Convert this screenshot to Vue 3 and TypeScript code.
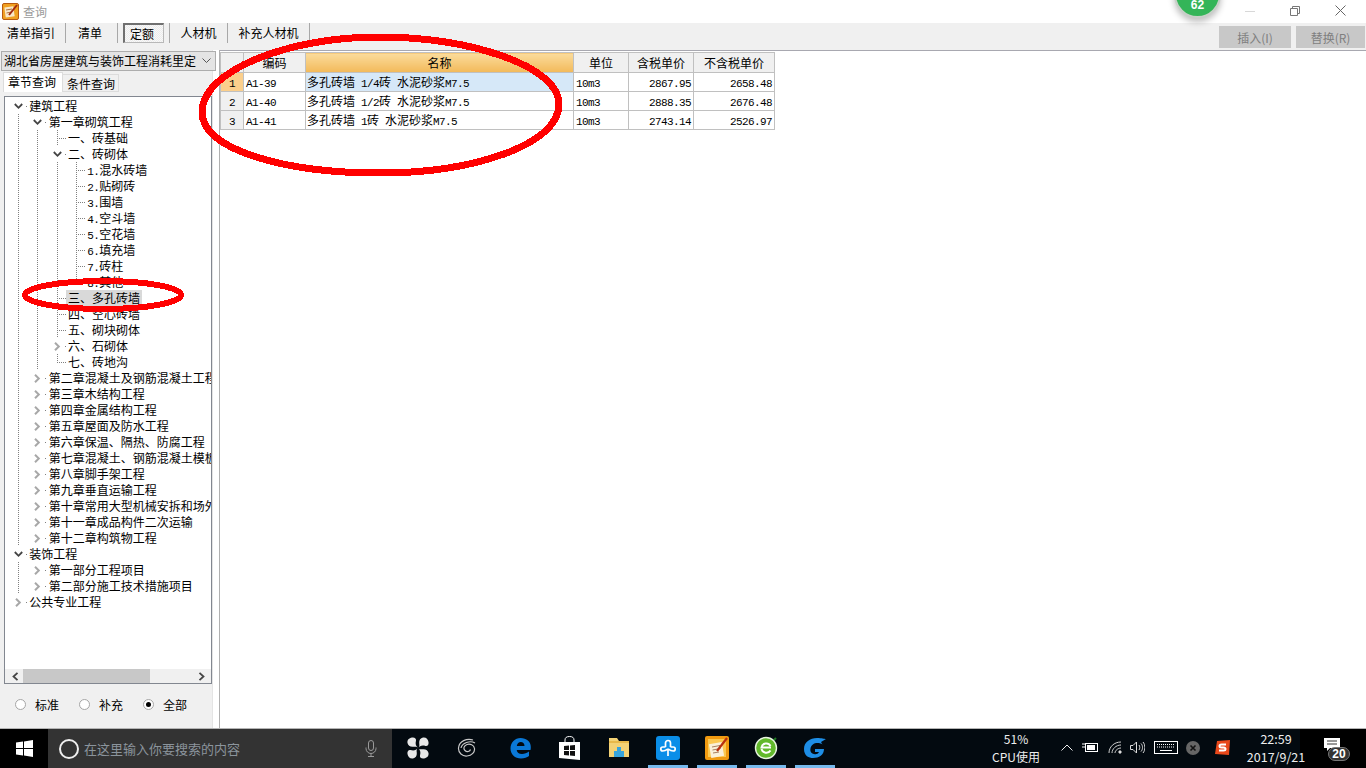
<script setup lang="ts">
interface TreeNode {
  label: string
  open?: boolean
  collapsed?: boolean
  selected?: boolean
  children?: TreeNode[]
}

interface FlatRow {
  label: string
  guides: boolean[]
  kind: 'open' | 'closed' | 'leaf' | 'last'
  selected: boolean
}

const tabs = [
  { label: '清单指引', width: 66 },
  { label: '清单', width: 52 },
  { label: '定额', width: 52, active: true },
  { label: '人材机', width: 58 },
  { label: '补充人材机', width: 82 },
]

const closed = (label: string): TreeNode => ({ label, collapsed: true })

const tree: TreeNode[] = [
  {
    label: '建筑工程',
    open: true,
    children: [
      {
        label: '第一章砌筑工程',
        open: true,
        children: [
          { label: '一、砖基础' },
          {
            label: '二、砖砌体',
            open: true,
            children: ['1.混水砖墙', '2.贴砌砖', '3.围墙', '4.空斗墙', '5.空花墙', '6.填充墙', '7.砖柱', '8.其他'].map((label) => ({ label })),
          },
          { label: '三、多孔砖墙', selected: true },
          { label: '四、空心砖墙' },
          { label: '五、砌块砌体' },
          closed('六、石砌体'),
          { label: '七、砖地沟' },
        ],
      },
      closed('第二章混凝土及钢筋混凝土工程'),
      closed('第三章木结构工程'),
      closed('第四章金属结构工程'),
      closed('第五章屋面及防水工程'),
      closed('第六章保温、隔热、防腐工程'),
      closed('第七章混凝土、钢筋混凝土模板及支架工程'),
      closed('第八章脚手架工程'),
      closed('第九章垂直运输工程'),
      closed('第十章常用大型机械安拆和场外运输费用'),
      closed('第十一章成品构件二次运输'),
      closed('第十二章构筑物工程'),
    ],
  },
  {
    label: '装饰工程',
    open: true,
    children: [closed('第一部分工程项目'), closed('第二部分施工技术措施项目')],
  },
  closed('公共专业工程'),
]

function flatten (nodes: TreeNode[], guides: boolean[] = []): FlatRow[] {
  const out: FlatRow[] = []
  nodes.forEach((node, i) => {
    const isLast = i === nodes.length - 1
    let kind: FlatRow['kind'] = isLast ? 'last' : 'leaf'
    if (node.open) kind = 'open'
    if (node.collapsed) kind = 'closed'
    out.push({ label: node.label, guides, kind, selected: !!node.selected })
    if (node.children) out.push(...flatten(node.children, [...guides, !isLast]))
  })
  return out
}

const rows = flatten(tree)

// 半角字符单独走等宽字体，模拟宋体 12px 的 6px 半角
function parts (text: string): { text: string; latin: boolean }[] {
  return text.split(/([\x20-\x7e]+)/).filter(Boolean).map((t) => ({
    text: t,
    latin: /^[\x20-\x7e]+$/.test(t),
  }))
}

const quotas = [
  { code: 'A1-39', name: '多孔砖墙 1/4砖 水泥砂浆M7.5', unit: '10m3', tax: '2867.95', noTax: '2658.48' },
  { code: 'A1-40', name: '多孔砖墙 1/2砖 水泥砂浆M7.5', unit: '10m3', tax: '2888.35', noTax: '2676.48' },
  { code: 'A1-41', name: '多孔砖墙 1砖 水泥砂浆M7.5', unit: '10m3', tax: '2743.14', noTax: '2526.97' },
]

const radios = [
  { label: '标准', on: false },
  { label: '补充', on: false },
  { label: '全部', on: true },
]

const lobe = 'M11 10.500C9 9.500 8 7 9 3.500C9.500 1.500 7.500 0 5 .5C2 1 0 3 .5 6C1 8.500 3 10 6 9.800C8 9.500 10 9.500 11 10.500z'
</script>

<template>
  <div class="window">
    <header class="titlebar">
      <svg class="app-icon" width="17" height="17" viewBox="0 0 17 17">
        <rect x="0.5" y="0.5" width="16" height="16" rx="1.5" fill="#f0a020" stroke="#b85a10" />
        <rect x="3" y="4" width="9" height="10" fill="#f8e8c8" transform="rotate(-8 7 9)" />
        <path d="M4 7l6-1M4.500 10l5-1" stroke="#b07040" />
        <path d="M7 12L15 2" stroke="#a02810" stroke-width="2" />
      </svg>
      <span class="title-text">查询</span>
      <div class="win-controls">
        <svg width="10" height="10" viewBox="0 0 10 10"><path d="M0 5.500h10" stroke="#d8d8d8" /></svg>
        <svg width="10" height="10" viewBox="0 0 10 10" fill="none" stroke="#777"><path d="M.5 2.500h7v7h-7zM2.500 2.500v-2h7v7h-2" /></svg>
        <svg width="11" height="11" viewBox="0 0 11 11" fill="none" stroke="#666"><path d="M.5 .5l10 10M10.500 .5l-10 10" /></svg>
      </div>
    </header>

    <div class="toolbar">
      <nav class="tabs">
        <div v-for="(tab, i) in tabs" :key="tab.label" class="tab" :class="{ nudge: i < 3 }" :style="{ width: tab.width + 'px' }">
          <span :class="{ pressed: tab.active }">{{ tab.label }}</span>
        </div>
      </nav>
      <div class="actions">
        <button class="action insert">插入(I)</button>
        <button class="action">替换(R)</button>
      </div>
    </div>

    <main class="main">
      <aside class="left">
        <div class="combo">
          <span class="combo-text">湖北省房屋建筑与装饰工程消耗里定额</span>
          <svg width="9" height="6" viewBox="0 0 9 6" fill="none" stroke="#555"><path d="M.5 .5l4 4 4-4" /></svg>
        </div>
        <div class="page-tabs">
          <span class="page-tab active">章节查询</span>
          <span class="page-tab">条件查询</span>
        </div>
        <div class="tree-box">
          <div class="tree">
            <div v-for="(row, i) in rows" :key="i" class="row">
              <span v-for="(g, j) in row.guides" :key="j" class="cell" :class="{ guide: g }" />
              <span class="cell expander" :class="row.kind">
                <svg v-if="row.kind === 'open'" width="9" height="7" viewBox="0 0 9 7" fill="none" stroke="#444" stroke-width="1.800"><path d="M.8 1l3.700 3.800L8.200 1" /></svg>
                <svg v-else-if="row.kind === 'closed'" width="7" height="9" viewBox="0 0 7 9" fill="none" stroke="#a8a8a8" stroke-width="2"><path d="M1 .8l3.800 3.700L1 8.200" /></svg>
              </span>
              <span class="label" :class="{ selected: row.selected }"><span v-for="(p, k) in parts(row.label)" :key="k" :class="{ latin: p.latin }">{{ p.text }}</span></span>
            </div>
          </div>
          <div class="hscroll">
            <svg width="7" height="9" viewBox="0 0 7 9" fill="none" stroke="#444" stroke-width="1.800"><path d="M5.500 .8L1.500 4.500l4 3.700" /></svg>
            <div class="thumb" />
            <svg width="7" height="9" viewBox="0 0 7 9" fill="none" stroke="#444" stroke-width="1.800"><path d="M1.500 .8l4 3.700-4 3.700" /></svg>
          </div>
        </div>
        <div class="radios">
          <label v-for="r in radios" :key="r.label" class="radio">
            <span class="dot" :class="{ on: r.on }" />
            {{ r.label }}
          </label>
        </div>
      </aside>

      <section class="right">
        <table class="grid">
          <colgroup>
            <col style="width: 23px"><col style="width: 62px"><col style="width: 268px"><col style="width: 55px"><col style="width: 65px"><col style="width: 81px">
          </colgroup>
          <thead>
            <tr>
              <th />
              <th>编码</th>
              <th class="hot">名称</th>
              <th>单位</th>
              <th>含税单价</th>
              <th>不含税单价</th>
            </tr>
          </thead>
          <tbody>
            <tr v-for="(q, i) in quotas" :key="q.code">
              <td class="num" :class="{ current: i === 0 }"><span class="latin">{{ i + 1 }}</span></td>
              <td><span class="latin">{{ q.code }}</span></td>
              <td class="name" :class="{ picked: i === 0 }"><span v-for="(p, k) in parts(q.name)" :key="k" :class="{ latin: p.latin }">{{ p.text }}</span></td>
              <td><span class="latin">{{ q.unit }}</span></td>
              <td class="price"><span class="latin">{{ q.tax }}</span></td>
              <td class="price"><span class="latin">{{ q.noTax }}</span></td>
            </tr>
          </tbody>
        </table>
      </section>
    </main>

    <footer class="taskbar">
      <div class="start">
        <svg width="17" height="17" viewBox="0 0 17 17" fill="#fff"><path d="M0 2.600l7-1v6.500H0zM8 1.400l9-1.400v8.100H8zM0 9h7v6.500l-7-1zM8 9h9v8l-9-1.400z" /></svg>
      </div>
      <div class="search">
        <span class="cortana" />
        <span class="search-text">在这里输入你要搜索的内容</span>
        <svg class="mic" width="12" height="17" viewBox="0 0 12 17" fill="none" stroke="#9a9a9a"><rect x="3.500" y=".5" width="5" height="10" rx="2.500" /><path d="M1 7.500v1a5 5 0 0 0 10 0v-1M6 13.500v3M3 16.500h6" /></svg>
      </div>
      <div class="apps">
        <div class="app">
          <svg width="22" height="22" viewBox="0 0 22 22" fill="#e8e8e8">
            <path v-for="deg in [0, 90, 180, 270]" :key="deg" :d="lobe" :transform="`rotate(${deg} 11 11)`" />
          </svg>
        </div>
        <div class="app">
          <svg width="20" height="20" viewBox="0 0 20 20" fill="none" stroke="#c8c8c8" stroke-width="1.200"><path d="M16 2C10 0 2 3 1.500 10c-.3 5 4 8.500 8.500 8 5-.5 8-4 7.500-7.500C17 7 13 5.500 10 6.500S6 10.500 8 12.500s5 1 5.500-1" /><path d="M18 5C13 2 5 5 4 10" /></svg>
        </div>
        <div class="app edge">
          <svg width="21" height="22" viewBox="0 0 21 22"><path d="M10.500 1C5 1 .5 5.500.5 11.500S5 21.500 11 21.500c3.500 0 6-1 8-2.500v-4.500c-2 1.500-4.500 2.500-7 2.500-3 0-5-1.500-5.300-4h13.800c.3-1 .3-2 .3-3C20.800 4.500 16.500 1 10.500 1zM6.800 9c.4-2.500 2-4 4-4s3.700 1.500 3.700 4z" fill="#0a78d7" /></svg>
        </div>
        <div class="app">
          <svg width="21" height="24" viewBox="0 0 21 24"><path d="M0 6h21v18l-21-2z" fill="#fff" /><path d="M6 7V4a4.500 3.500 0 0 1 9 0v3" fill="none" stroke="#fff" /><path d="M5 10l5-.5V14H5zM11 9.500l5-.5v5h-5zM5 15h5v4.500l-5-.5zM11 15h5v5l-5-.5z" fill="#111" /></svg>
        </div>
        <div class="app">
          <svg width="22" height="20" viewBox="0 0 22 20"><path d="M1 0h8l2 3h10v16H1z" fill="#f3d275" /><path d="M1 3h20v2H1z" fill="#e8b94a" /><path d="M6 19v-6h3V9h4v4h3v6z" fill="#37a4dc" /></svg>
        </div>
        <div class="app running">
          <svg width="24" height="24" viewBox="0 0 24 24"><rect width="24" height="24" rx="3" fill="#0a8ee8" /><path d="M9.500 11V7a2.500 2.500 0 0 1 5 0v4M9.500 11H6.800a2 2 0 0 0 0 4c2 0 3.700-1 5.200-2M14.500 11h2.700a2 2 0 0 1 0 4c-2 0-3.700-1-5.200-2M12 13v7" fill="none" stroke="#fff" stroke-width="1.700" /></svg>
        </div>
        <div class="app running">
          <svg width="24" height="24" viewBox="0 0 24 24"><rect width="24" height="24" rx="2" fill="#f09a10" /><rect x="3" y="3" width="18" height="18" fill="#fbc850" /><rect x="5" y="7" width="13" height="14" fill="#faf0d8" transform="rotate(-10 11 14)" /><path d="M7 11l8-1.500M7.500 14l8-1.500M8 17l6-1" stroke="#a88060" /><path d="M12 15L22 2" stroke="#b83010" stroke-width="2.200" /></svg>
        </div>
        <div class="app running">
          <svg width="24" height="24" viewBox="0 0 24 24"><path d="M4 20L22 2" stroke="#1c7a20" stroke-width="2" /><circle cx="12" cy="12" r="10.500" fill="#62b92c" stroke="#e8f4e0" stroke-width="1.400" /><path d="M17 11.500H7.500a4.800 4.800 0 0 1 9-1.500M7.500 13a5 5 0 0 0 9 1.500" fill="none" stroke="#fff" stroke-width="2" /></svg>
        </div>
        <div class="app running">
          <svg width="24" height="24" viewBox="0 0 24 24"><path d="M23 3c-2 0-4-1-9-1C7 2 1 6 1 13s5 9 9 9c6 0 11-3 11-9h-9v3h4c-1 2-3 2.500-5 2-3-.5-4-3-3.500-5.500C8 9 11 7 14.500 7c2 0 4 .5 5 1.500L18 6z" fill="#1e8ee6" /></svg>
        </div>
      </div>
      <div class="tray">
        <div class="cpu"><span>51%</span><span>CPU使用</span></div>
        <svg class="t-caret" width="12" height="7" viewBox="0 0 12 7" fill="none" stroke="#eee"><path d="M.5 6.500L6 1l5.500 5.500" /></svg>
        <svg class="t-batt" width="16" height="11" viewBox="0 0 16 11"><path d="M0 2h3M0 5h3" stroke="#fff" /><rect x="3.500" y="1.500" width="12" height="8" fill="none" stroke="#fff" /><rect x="5" y="3" width="8" height="5" fill="#fff" /></svg>
        <svg class="t-wifi" width="14" height="13" viewBox="0 0 14 13" fill="none" stroke="#cfcfcf"><path d="M1 12C1 6 6 1 13 1M4 12c0-4 4-8 9-8M7 12c0-2.500 3-5 6-5" /><circle cx="12" cy="11" r="1.200" fill="#fff" /></svg>
        <svg class="t-vol" width="15" height="13" viewBox="0 0 15 13" fill="none" stroke="#ddd"><path d="M.5 4.500h2.500l3.500-3.500v11L3 8.500H.5zM9 4c1 1.500 1 3.500 0 5M11 2.500c2 2 2 6 0 8M13 1c2.500 3 2.500 8 0 11" /></svg>
        <svg class="t-kbd" width="24" height="13" viewBox="0 0 24 13" fill="none" stroke="#fff"><rect x=".5" y=".5" width="23" height="12" /><path d="M3 3.500h18M3 6h18" stroke-dasharray="1 1" /><path d="M6 9.500h12" /></svg>
        <svg class="t-err" width="14" height="14" viewBox="0 0 14 14"><circle cx="7" cy="7" r="7" fill="#666" /><path d="M4.500 4.500l5 5M9.500 4.500l-5 5" stroke="#111" stroke-width="1.600" /></svg>
        <svg class="t-ime" width="15" height="15" viewBox="0 0 15 15"><path d="M2 1l13-1-1 15-14-1z" fill="#e8481a" /><path d="M11 4.500H6.500Q4.500 4.500 4.500 6t2 1.500h2q2 0 2 1.500t-2 1.500H4" fill="none" stroke="#fff" stroke-width="2" /></svg>
        <div class="clock"><span>22:59</span><span>2017/9/21</span></div>
        <div class="notify">
          <svg width="16" height="13" viewBox="0 0 16 13"><path d="M0 0h16v10H6l-3 3v-3H0z" fill="#fff" /><path d="M3 3h10M3 6h10" stroke="#333" /></svg>
          <span class="count">20</span>
        </div>
      </div>
    </footer>

    <!-- 截图上的标注，飘在界面之上 -->
    <svg class="marks" width="1366" height="768" viewBox="0 0 1366 768" fill="none" stroke="#ff0000" shape-rendering="crispEdges">
      <path d="M202 112C202 70 290 37 378 37C470 37 559 66 559 104C559 146 470 173 380 173C285 173 202 150 202 112Z" stroke-width="7" />
      <ellipse cx="103" cy="295" rx="78" ry="14" stroke-width="6" />
    </svg>

    <div class="badge"><span>62</span></div>
  </div>
</template>

<style>
html, body {
  margin: 0;
  background: #fff;
}
</style>

<style scoped>
.window {
  position: relative;
  display: flex;
  flex-direction: column;
  width: 1366px;
  height: 768px;
  overflow: hidden;
  font: 12px/16px "Noto Sans CJK SC", "Liberation Sans", sans-serif;
  color: #000;
  background: #fff;
}

.latin {
  font-family: "Liberation Mono", monospace;
  font-size: 11px;
  letter-spacing: -0.6px;
  line-height: 1;
}

.titlebar {
  display: flex;
  align-items: center;
  flex: 0 0 23px;
  padding-left: 2px;
  background: #fff;
}

.title-text {
  margin-left: 4px;
  font-size: 12px;
  color: #9a9a9a;
}

.win-controls {
  display: flex;
  align-items: center;
  gap: 35px;
  margin-left: auto;
  margin-right: 20px;
  padding-bottom: 2px;
}

.toolbar {
  display: flex;
  flex: 0 0 27px;
  background: #f0f0f0;
}

.tabs {
  display: flex;
  height: 20px;
}

.tab {
  display: flex;
  align-items: center;
  justify-content: center;
  box-sizing: border-box;
  border-right: 1px solid #a8a8a8;
}

.tab.nudge {
  padding-right: 3px;
}

.tab .pressed {
  box-sizing: border-box;
  width: 41px;
  height: 20px;
  line-height: 18px;
  margin-right: -2px;
  padding-right: 3px;
  text-align: center;
  border: 1px solid #707070;
  border-right-color: #b8b8b8;
  border-bottom-color: #b8b8b8;
  border-left-width: 2px;
  border-top-width: 2px;
  background: repeating-conic-gradient(#f8f8f8 0 25%, #ececec 0 50%) 0 0 / 2px 2px;
}

.actions {
  display: flex;
  gap: 5px;
  margin-left: auto;
  margin-right: 1px;
  padding-top: 3px;
}

.action {
  width: 69px;
  height: 22px;
  padding: 2px 0 0;
  border: 0;
  background: #c8c8c8;
  color: #7f7f7f;
  font: inherit;
}

.action.insert {
  width: 72px;
}

.main {
  display: flex;
  flex: 1;
  min-height: 0;
}

.left {
  display: flex;
  flex-direction: column;
  box-sizing: border-box;
  flex: 0 0 220px;
  background: #f0f0f0;
  box-shadow: inset -6px 0 0 #fff, inset -7px 0 0 #e4e4e4;
  border-right: 1px solid #b0b0b0;
  padding-bottom: 3px;
}

.combo {
  display: flex;
  align-items: center;
  justify-content: space-between;
  box-sizing: border-box;
  height: 20px;
  width: 215px;
  margin: 1px 0 0 1px;
  padding: 0 4px 0 2px;
  background: #e4e4e4;
  border: 1px solid #adadad;
  overflow: hidden;
  white-space: nowrap;
}

.combo-text {
  width: 192px;
  overflow: hidden;
}

.page-tabs {
  display: flex;
  align-items: flex-end;
  height: 19px;
  margin: 2px 0 0 3px;
}

.page-tab {
  box-sizing: border-box;
  width: 56px;
  height: 18px;
  padding-left: 4px;
  line-height: 18px;
  background: #f0f0f0;
  border: 1px solid #dcdcdc;
  border-left: 0;
}

.page-tab.active {
  width: 60px;
  height: 20px;
  padding-left: 4px;
  background: #fff;
  border-bottom: 0;
  border-left: 1px solid #dcdcdc;
}

.tree-box {
  display: flex;
  flex-direction: column;
  box-sizing: border-box;
  height: 588px;
  width: 208px;
  margin: 4px 0 0 4px;
  border: 1px solid #828790;
  background: #fff;
}

.tree {
  flex: 1;
  min-height: 0;
  padding: 1px 0 0 3px;
  overflow: hidden;
}

.row {
  display: flex;
  align-items: center;
  height: 16px;
  white-space: nowrap;
}

.cell {
  display: flex;
  align-items: center;
  justify-content: flex-start;
  flex: 0 0 19.33px;
  min-width: 0;
  height: 16px;
}

.cell.guide {
  background: linear-gradient(#808080 50%, transparent 50%) 10px 0 / 1px 2px repeat-y;
}

.expander svg {
  flex: none;
  margin-left: 6px;
}

.expander.closed svg {
  margin-left: 7px;
}

.expander.open::after,
.expander.closed::after {
  content: "";
  flex: none;
  width: 1px;
  height: 1px;
  margin-left: 3px;
  background: #808080;
}

.expander.closed::after {
  margin-left: 4px;
}

.expander.leaf {
  background: linear-gradient(#808080 50%, transparent 50%) 10px 0 / 1px 2px repeat-y;
}

.expander.last {
  background: repeating-linear-gradient(#808080 0 1px, transparent 1px 2px) 10px 0 / 1px 8px no-repeat;
}

.expander.leaf::before,
.expander.last::before {
  content: "";
  flex: none;
  width: 9px;
  height: 1px;
  margin-left: 10px;
  background: repeating-linear-gradient(90deg, #808080 0 1px, transparent 1px 2px);
}

.label {
  margin-left: 2px;
}

.label.selected {
  margin-left: 0;
  padding: 0 2px;
  background: #d9d9d9;
}

.hscroll {
  display: flex;
  align-items: center;
  flex: 0 0 14px;
  padding: 0 5px 0 7px;
  background: #f0f0f0;
}

.thumb {
  flex: 0 0 127px;
  height: 14px;
  margin: 0 48px 0 4px;
  background: #c8c8c8;
}

.radios {
  display: flex;
  flex: 1;
  align-items: center;
  padding: 0 0 0 15px;
}

.radio {
  display: flex;
  align-items: center;
  width: 64px;
}

.dot {
  position: relative;
  box-sizing: border-box;
  width: 11px;
  height: 11px;
  margin-right: 9px;
  border: 1px solid #a6a6a6;
  border-radius: 50%;
  background: #fff;
}

.dot.on::after {
  content: "";
  position: absolute;
  inset: 2px;
  border-radius: 50%;
  background: #000;
}

.right {
  flex: 1;
  background: #fff;
  border-top: 1px solid #a8a8b0;
  padding: 1px 0 0;
}

.grid {
  table-layout: fixed;
  width: 554px;
  border-collapse: collapse;
  border-spacing: 0;
}

.grid th,
.grid td {
  box-sizing: border-box;
  height: 19px;
  padding: 0 2px 1px;
  border: 1px solid #c0c0c0;
  font-weight: 400;
  line-height: 15px;
  white-space: nowrap;
  overflow: hidden;
}

.grid th {
  height: 20px;
  text-align: center;
  background: #f0f0f0;
}

.grid th.hot {
  background: linear-gradient(#fbdc9c, #f2b95a);
}

.grid td.name {
  padding-left: 1px;
}

.grid td.num {
  text-align: center;
  background: #f0f0f0;
}

.grid td.current {
  background: #fbcf8c;
}

.grid td.picked {
  background: #d6e8f8;
}

.grid td.price {
  text-align: right;
}

.taskbar {
  display: flex;
  align-items: stretch;
  flex: 0 0 40px;
  box-sizing: border-box;
  border-top: 1px solid #b4b4b4;
  background: #030a10;
  color: #eee;
}

.start {
  display: flex;
  align-items: center;
  justify-content: center;
  flex: 0 0 48px;
  background: #000;
}

.search {
  display: flex;
  align-items: center;
  flex: 0 0 344px;
  padding-left: 11px;
  box-sizing: border-box;
  background: #333;
}

.cortana {
  box-sizing: border-box;
  width: 20px;
  height: 20px;
  border: 2px solid #eee;
  border-radius: 50%;
}

.search-text {
  margin-left: 5px;
  font-size: 13px;
  color: #8b949c;
}

.mic {
  margin-left: auto;
  margin-right: 15px;
}

.apps {
  display: flex;
  margin-left: 1px;
}

.app {
  position: relative;
  display: flex;
  align-items: center;
  justify-content: center;
  width: 49px;
  padding-bottom: 2px;
  box-sizing: border-box;
}

.app.edge {
  margin-left: 5px;
}

.app.running::after {
  content: "";
  position: absolute;
  left: 5px;
  right: 4px;
  bottom: 0;
  height: 3px;
  background: #76b9ed;
}

.tray {
  display: flex;
  align-items: center;
  flex: 1;
  margin-left: 141px;
  padding-bottom: 2px;
  background: linear-gradient(90deg, #030a10 0 320px, #000 320px);
}

.cpu,
.clock {
  display: flex;
  flex-direction: column;
  align-items: center;
  line-height: 18px;
  font-size: 12px;
}

.cpu {
  width: 72px;
}

.t-caret {
  margin-left: 9px;
}

.t-batt {
  margin-left: 9px;
}

.t-wifi {
  margin-left: 10px;
}

.t-vol {
  margin-left: 8px;
}

.t-kbd {
  margin-left: 9px;
}

.t-err {
  margin-left: 8px;
}

.t-ime {
  margin-left: 15px;
}

.clock {
  width: 66px;
  margin-left: 13px;
  font-size: 12.500px;
}

.notify {
  position: relative;
  margin-left: 5px;
  width: 34px;
  height: 26px;
}

.notify svg {
  position: absolute;
  left: 10px;
  top: 3px;
}

.count {
  position: absolute;
  left: 14px;
  top: 12px;
  width: 22px;
  height: 14px;
  line-height: 13px;
  text-align: center;
  border-radius: 8px;
  background: #333;
  border: 1px solid #777;
  box-sizing: border-box;
  font: bold 12px/12px "Liberation Sans", sans-serif;
  color: #fff;
}

.marks {
  position: absolute;
  inset: 0;
  pointer-events: none;
}

.badge {
  position: absolute;
  left: 1174px;
  top: -29px;
  display: flex;
  align-items: flex-end;
  justify-content: center;
  box-sizing: border-box;
  width: 47px;
  height: 47px;
  padding-bottom: 5px;
  border: 2px solid #c8d0c8;
  border-radius: 50%;
  background: #34b558;
  box-shadow: 0 4px 6px rgba(0, 0, 0, .25);
  font: bold 12px/12px "Liberation Sans", sans-serif;
  color: #fff;
}
</style>
